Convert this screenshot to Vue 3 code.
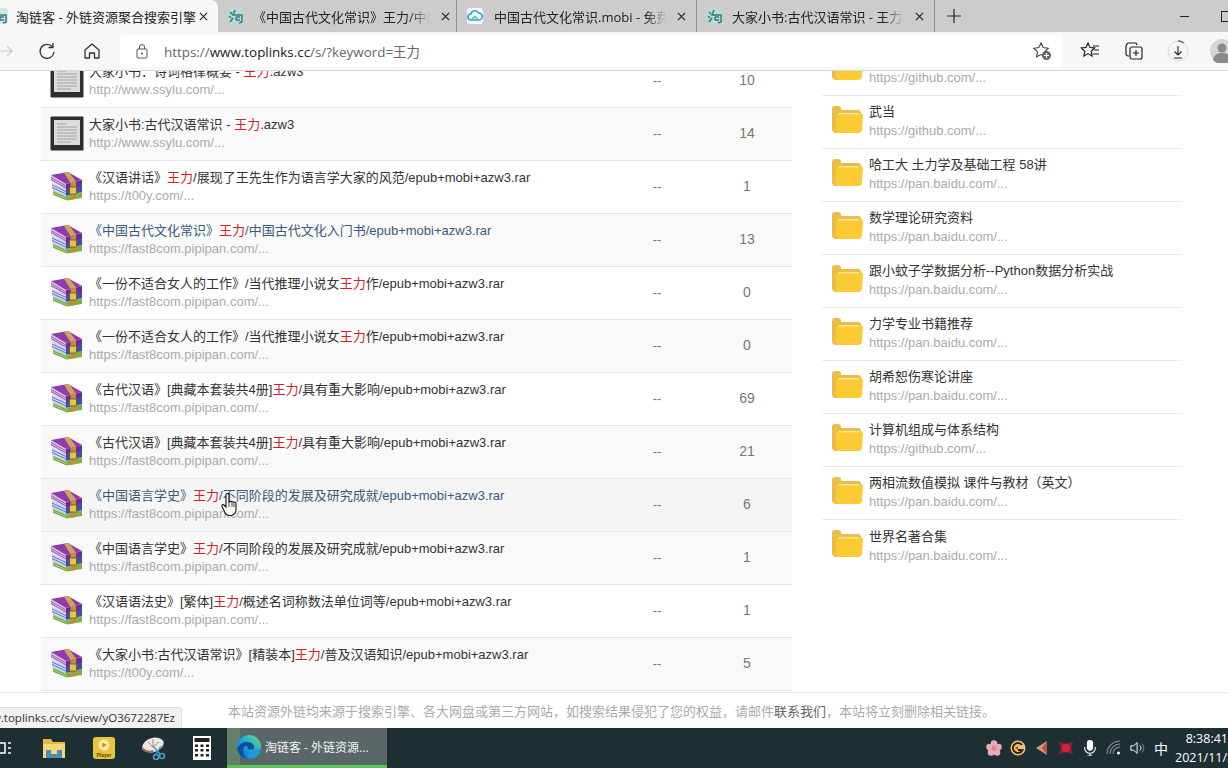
<script setup>
const rows = [
  { icon: 'book', pre: '大家小书：诗词格律概要 - ', post: '.azw3', url: 'http://www.ssylu.com/...', dl: '--', n: 10 },
  { icon: 'book', pre: '大家小书:古代汉语常识 - ', post: '.azw3', url: 'http://www.ssylu.com/...', dl: '--', n: 14 },
  { icon: 'rar', pre: '《汉语讲话》', post: '/展现了王先生作为语言学大家的风范/epub+mobi+azw3.rar', url: 'https://t00y.com/...', dl: '--', n: 1 },
  { icon: 'rar', pre: '《中国古代文化常识》', post: '/中国古代文化入门书/epub+mobi+azw3.rar', url: 'https://fast8com.pipipan.com/...', dl: '--', n: 13, visited: true },
  { icon: 'rar', pre: '《一份不适合女人的工作》/当代推理小说女', post: '作/epub+mobi+azw3.rar', url: 'https://fast8com.pipipan.com/...', dl: '--', n: 0 },
  { icon: 'rar', pre: '《一份不适合女人的工作》/当代推理小说女', post: '作/epub+mobi+azw3.rar', url: 'https://fast8com.pipipan.com/...', dl: '--', n: 0 },
  { icon: 'rar', pre: '《古代汉语》[典藏本套装共4册]', post: '/具有重大影响/epub+mobi+azw3.rar', url: 'https://fast8com.pipipan.com/...', dl: '--', n: 69 },
  { icon: 'rar', pre: '《古代汉语》[典藏本套装共4册]', post: '/具有重大影响/epub+mobi+azw3.rar', url: 'https://fast8com.pipipan.com/...', dl: '--', n: 21 },
  { icon: 'rar', pre: '《中国语言学史》', post: '/不同阶段的发展及研究成就/epub+mobi+azw3.rar', url: 'https://fast8com.pipipan.com/...', dl: '--', n: 6, visited: true },
  { icon: 'rar', pre: '《中国语言学史》', post: '/不同阶段的发展及研究成就/epub+mobi+azw3.rar', url: 'https://fast8com.pipipan.com/...', dl: '--', n: 1 },
  { icon: 'rar', pre: '《汉语语法史》[繁体]', post: '/概述名词称数法单位词等/epub+mobi+azw3.rar', url: 'https://fast8com.pipipan.com/...', dl: '--', n: 1 },
  { icon: 'rar', pre: '《大家小书:古代汉语常识》[精装本]', post: '/普及汉语知识/epub+mobi+azw3.rar', url: 'https://t00y.com/...', dl: '--', n: 5 },
]
const side = [
  { t: '计算机网络', u: 'https://github.com/...' },
  { t: '武当', u: 'https://github.com/...' },
  { t: '哈工大 土力学及基础工程 58讲', u: 'https://pan.baidu.com/...' },
  { t: '数学理论研究资料', u: 'https://pan.baidu.com/...' },
  { t: '跟小蚊子学数据分析--Python数据分析实战', u: 'https://pan.baidu.com/...' },
  { t: '力学专业书籍推荐', u: 'https://pan.baidu.com/...' },
  { t: '胡希恕伤寒论讲座', u: 'https://pan.baidu.com/...' },
  { t: '计算机组成与体系结构', u: 'https://github.com/...' },
  { t: '两相流数值模拟 课件与教材（英文）', u: 'https://pan.baidu.com/...' },
  { t: '世界名著合集', u: 'https://pan.baidu.com/...' },
]
const tabs = [
  { t: '《中国古代文化常识》王力/中国古代文化入门书', w: 239, pr: 6, ml: 8, icon: 'tao' },
  { t: '中国古代文化常识.mobi - 免费下载', w: 240, pr: 10, ml: 10, icon: 'cloud' },
  { t: '大家小书:古代汉语常识 - 王力.azw3', w: 238, pr: 10, ml: 8, icon: 'tao' },
]
</script>

<template>
  <div class="page">
    <header class="chrome">
      <div class="tabstrip">
        <div class="tab active">
          <svg class="fav first" viewBox="0 0 18 18"><rect x="1" y="1" width="16" height="16" rx="3" fill="#cfe6e4"/><path d="M3 5l2 2M2 9l2 2M3 15l3-4M8 3l-2 5h9v7l-3 1M9 10h4M9 13h4M9 10v3" fill="none" stroke="#2c7f84" stroke-width="1.5"/></svg>
          <span class="tab-title">淘链客 - 外链资源聚合搜索引擎</span>
          <svg class="x" viewBox="0 0 10 10"><path d="M1 1l8 8M9 1l-8 8" stroke="#222" stroke-width="1.3"/></svg>
        </div>
        <div v-for="tab in tabs" :key="tab.t" class="tab" :style="{ width: tab.w + 'px', paddingRight: tab.pr + 'px' }">
          <svg v-if="tab.icon === 'tao'" class="fav" viewBox="0 0 18 18"><rect x="1" y="1" width="16" height="16" rx="3" fill="#bcd8d8"/><path d="M3 5l2 2M2 9l2 2M3 15l3-4M8 3l-2 5h9v7l-3 1M9 10h4M9 13h4M9 10v3" fill="none" stroke="#2c7f84" stroke-width="1.5"/></svg>
          <svg v-else class="fav" viewBox="0 0 18 18"><rect x="1" y="1" width="16" height="16" rx="3" fill="#f4f6f8"/><path d="M5 13a3 3 0 010-6 4 4 0 017.5-1 3.5 3.5 0 01.5 7z" fill="none" stroke="#2da3e0" stroke-width="1.6"/><path d="M6 12.5l3-3 3 3" fill="none" stroke="#3cc0a8" stroke-width="1.4"/></svg>
          <span class="tab-title fade" :style="{ marginLeft: tab.ml + 'px' }">{{ tab.t }}</span>
          <svg class="x" viewBox="0 0 10 10"><path d="M1 1l8 8M9 1l-8 8" stroke="#222" stroke-width="1.3"/></svg>
        </div>
        <svg class="plus" viewBox="0 0 14 14"><path d="M7 0v14M0 7h14" stroke="#222" stroke-width="1.2"/></svg>
        <div class="winbtns">
          <span class="minimize"></span>
          <span class="restore"></span>
        </div>
      </div>
      <div class="toolbar">
        <svg class="back" viewBox="0 0 14 14"><path d="M0 7h13M8 2l5 5-5 5" fill="none" stroke="#c9c9c9" stroke-width="1.2"/></svg>
        <svg class="tool refresh" viewBox="0 0 18 18"><path d="M14.5 5A7 7 0 1016 10" fill="none" stroke="#333" stroke-width="1.3"/><path d="M15 1v4.5h-4.5" fill="none" stroke="#333" stroke-width="1.3"/></svg>
        <svg class="tool home" viewBox="0 0 18 18"><path d="M2 8l7-6 7 6v8h-4.5v-5h-5v5H2z" fill="none" stroke="#333" stroke-width="1.3" stroke-linejoin="round"/></svg>
        <div class="address">
          <svg class="lock" viewBox="0 0 12 16"><rect x="1" y="6" width="10" height="9" rx="1" fill="none" stroke="#555" stroke-width="1"/><path d="M3.5 6V4a2.5 2.5 0 015 0v2" fill="none" stroke="#555"/><circle cx="6" cy="10.5" r="1" fill="#555"/></svg>
          <span class="url"><i>https://</i>www.toplinks.cc<i>/s/?keyword=王力</i></span>
          <svg class="star-add" viewBox="0 0 20 20"><path d="M9 2l2.2 4.6 5 .7-3.6 3.5.8 5L9 13.5l-4.4 2.3.8-5L1.800 7.300l5-.7z" fill="none" stroke="#444" stroke-width="1.1"/><circle cx="14.500" cy="14.500" r="4.500" fill="#666"/><path d="M14.500 12v5M12 14.500h5" stroke="#fff" stroke-width="1.2"/></svg>
        </div>
        <svg class="tool fav-list" viewBox="0 0 20 20"><path d="M8 2l2 4.400 4.600.6-3.400 3.200.9 4.800L8 12.600 3.900 15l.9-4.800L1.400 7 6 6.400z" fill="none" stroke="#222" stroke-width="1.2"/><path d="M13 5h6M14 9h5M13 13h6" stroke="#222" stroke-width="1.2"/></svg>
        <svg class="tool coll" viewBox="0 0 20 20"><path d="M5 15H4a2 2 0 01-2-2V5l1-2a2 2 0 012-1h7l1 2" fill="none" stroke="#222" stroke-width="1.2"/><rect x="6" y="6" width="12" height="12" rx="2" fill="none" stroke="#222" stroke-width="1.2"/><path d="M12 9v6M9 12h6" stroke="#222" stroke-width="1.2"/></svg>
        <svg class="tool dl" viewBox="0 0 22 22"><circle cx="11" cy="11" r="10" fill="#f4f4f4" stroke="#dcdcdc" stroke-width="1"/><path d="M11 1a10 10 0 016 2" fill="none" stroke="#4a7f8f" stroke-width="1.400"/><path d="M11 6v9M7.500 11.500L11 15l3.500-3.500M7 18h8" fill="none" stroke="#222" stroke-width="1.100"/></svg>
        <svg class="avatar" viewBox="0 0 24 24"><circle cx="12" cy="12" r="12" fill="#d6d6d6"/><circle cx="12" cy="9" r="4.500" fill="#8a8a8a"/><path d="M3 21c1-6 5-7 9-7s8 1 9 7a12 12 0 01-18 0z" fill="#8a8a8a"/></svg>
      </div>
    </header>

    <main class="content">
      <div class="columns">
        <section class="results">
          <div v-for="(r, i) in rows" :key="i" class="row" :class="{ even: i % 2 === 1, hover: i === 8 }">
            <div class="cell-main">
              <svg v-if="r.icon === 'book'" class="icon" viewBox="0 0 34 35">
                <rect x="0.500" y="0.500" width="33" height="34" rx="1" fill="#2e2e2e"/>
                <rect x="4" y="4" width="26" height="25" fill="#dcdcdc"/>
                <path d="M7 8h9M7 11h20M7 14h20M7 17h20M7 20h20M7 23h20M7 26h14" stroke="#b4b4b4" stroke-width="1.300"/>
              </svg>
              <svg v-else class="icon rar" viewBox="0 0 32 29">
                <path d="M2 18l14 6v4.500L2 23z" fill="#a8d07c"/>
                <path d="M16 24l15-4v6l-15 2.500z" fill="#7fb040"/>
                <path d="M2 20l14 6M2 22l14 6" fill="none" stroke="#5f8f38" stroke-width="0.700"/>
                <path d="M1 10.500l14 6.500v7L1 18z" fill="#ccd5f2"/>
                <path d="M15 17l16-4v7l-16 4z" fill="#3e4fb4"/>
                <path d="M1 13l14 6.500M1 15.500l14 6.500" fill="none" stroke="#4a5cbc" stroke-width="0.800"/>
                <path d="M0 3l15 9v5.500L0 9z" fill="#d9c5e6"/>
                <path d="M0 5.500l15 8.500M0 7.500l15 8.500" fill="none" stroke="#8c3aa8" stroke-width="0.800"/>
                <path d="M15 12l16-4v5.500l-16 4z" fill="#6c2a94"/>
                <path d="M0 3l17-3 14 8-16 4z" fill="#8f3cab"/>
                <path d="M13 .8L18 0l7 9.500L19.500 11z" fill="#d2a45a"/>
                <path d="M19.500 11L25 9.500v17.200l-5.500 1.300z" fill="#c18d45"/>
                <rect x="18.500" y="15" width="7" height="7" rx="1" fill="#e6c53c" stroke="#6d5320" stroke-width="0.800"/>
              </svg>
              <div class="text">
                <div class="title" :class="{ visited: r.visited }">{{ r.pre }}<em>王力</em>{{ r.post }}</div>
                <div class="link">{{ r.url }}</div>
              </div>
            </div>
            <div class="num dash">{{ r.dl }}</div>
            <div class="num">{{ r.n }}</div>
          </div>
        </section>
        <aside class="side">
          <div v-for="(s, i) in side" :key="i" class="side-row">
            <svg class="folder" viewBox="0 0 31 27">
              <path d="M0 3a3 3 0 013-3h3a3 3 0 013 3v1h17a3 3 0 013 3v3L6 27H4a4 4 0 01-4-4z" fill="#e8bd4a"/>
              <path d="M4 10a3 3 0 013-3h21a3 3 0 013 3l-1 13a4 4 0 01-4 4H8a4 4 0 01-4-4z" fill="#fcca33"/>
              <path d="M7 7.800h20" stroke="#ffeeb0" stroke-width="1.200"/>
            </svg>
            <div class="text">
              <div class="title">{{ s.t }}</div>
              <div class="link">{{ s.u }}</div>
            </div>
          </div>
        </aside>
      </div>
      <svg class="cursor" viewBox="0 0 16 24"><path d="M5 2a1.500 1.500 0 013 0v7l1-.5c1-.3 1.700 0 2 .5 1-.5 1.800-.2 2 .5 1-.3 1.800.2 2 1v6c0 3-2 6-5 6H8c-2 0-3-1-4-3l-3-6c-.5-1.500 1-2.500 2-1.500l2 2z" fill="#fff" stroke="#111" stroke-width="1.100"/><path d="M8 9v5M11 9.500V14M13 10.500V14" stroke="#111" stroke-width="0.800"/></svg>
    </main>

    <footer class="notice">
      本站资源外链均来源于搜索引擎、各大网盘或第三方网站，如搜索结果侵犯了您的权益，请邮件<b>联系我们</b>，本站将立刻删除相关链接。
      <div class="status"><span>https://www.toplinks.cc/s/view/yO3672287Ez</span></div>
    </footer>

    <nav class="taskbar">
      <svg class="taskview" viewBox="0 0 14 14"><path d="M0 2h7v10H0M10 2h3M10 7h3M10 12h3" fill="none" stroke="#fff" stroke-width="1.500"/></svg>
      <svg class="tb explorer" viewBox="0 0 24 22"><path d="M1 2h8l2 3h12v16H1z" fill="#e8b93f"/><rect x="1" y="7" width="22" height="14" fill="#f5d777"/><rect x="4" y="13" width="16" height="8" fill="#4d8db0"/><rect x="9" y="13" width="6" height="4" fill="#f5d777"/></svg>
      <svg class="tb player" viewBox="0 0 24 24"><rect x="1" y="1" width="22" height="22" rx="3" fill="#e8c53a"/><circle cx="12" cy="9" r="5.500" fill="#f7e9a6"/><path d="M10.500 6.500l4 2.500-4 2.500z" fill="#b08b1b"/><text x="12" y="20.500" text-anchor="middle" class="player-t">Player</text></svg>
      <svg class="tb paint" viewBox="0 0 26 24"><ellipse cx="12" cy="9" rx="11" ry="7" fill="#efe6e0" transform="rotate(-18 12 9)"/><path d="M1.500 12.500c3 3.500 8 3.500 11 2.500" fill="none" stroke="#a86a66" stroke-width="2"/><path d="M12 3v8M7 6l5 5 6-5" fill="none" stroke="#9a8f88" stroke-width="1"/><circle cx="21" cy="20" r="2.500" fill="none" stroke="#3d9fd0" stroke-width="1.600"/><circle cx="15" cy="21" r="2.500" fill="none" stroke="#3d9fd0" stroke-width="1.600"/><path d="M12 10l7 8M20 10l-5 8" stroke="#3d9fd0" stroke-width="1.400"/></svg>
      <svg class="tb calc" viewBox="0 0 18 24"><rect width="18" height="24" fill="#fff"/><rect x="1.500" y="2" width="15" height="4" fill="#222"/><g fill="#222"><rect x="2" y="8.500" width="3" height="2.500"/><rect x="7.500" y="8.500" width="3" height="2.500"/><rect x="13" y="8.500" width="3" height="2.500"/><rect x="2" y="13" width="3" height="2.500"/><rect x="7.500" y="13" width="3" height="2.500"/><rect x="13" y="13" width="3" height="2.500"/><rect x="2" y="18" width="3" height="2.500"/><rect x="7.500" y="18" width="3" height="2.500"/><rect x="13" y="18" width="3" height="2.500"/></g></svg>
      <div class="task-active">
        <span class="task-edge"></span>
        <svg class="edge" viewBox="0 0 24 24"><defs><linearGradient id="eg" x1="0.900" y1="0.100" x2="0.100" y2="0.900"><stop offset="0" stop-color="#5ed48a"/><stop offset="0.500" stop-color="#22a6d8"/><stop offset="1" stop-color="#1565c8"/></linearGradient></defs><circle cx="12" cy="12" r="12" fill="url(#eg)"/><path d="M.5 14C2 8 8 6 13 7.500c4 1.300 5 4.500 3.500 7H11c-1-2 .5-3.500-2-3.500-3.500 0-4 7 0 12.500C4 22 1 18 .5 14z" fill="#0d4f9e"/><path d="M16.500 14.500c3 0 5.500 0 7.300-1-.5 4-3 7.500-6.800 9.500-3.500 1-6.500-.5-7.500-4 2.500 2 5.500 1 7-4.500z" fill="#1f9ad8"/></svg>
        <span class="task-label">淘链客 - 外链资源...</span>
      </div>
      <div class="tray">
        <svg class="ti" viewBox="0 0 16 16"><g fill="#e9a9b5"><circle cx="8" cy="3.500" r="3.300"/><circle cx="3.500" cy="7" r="3.300"/><circle cx="12.500" cy="7" r="3.300"/><circle cx="5" cy="12.500" r="3.300"/><circle cx="11" cy="12.500" r="3.300"/></g><circle cx="8" cy="8" r="2.200" fill="#d98a9a"/></svg>
        <svg class="ti" viewBox="0 0 16 16"><circle cx="8" cy="8" r="7.500" fill="#e8c878"/><path d="M12 5a5 5 0 10.500 5H8" fill="none" stroke="#3b2410" stroke-width="2"/><path d="M5 8l3-2v4z" fill="#c33"/></svg>
        <svg class="ti" viewBox="0 0 16 16"><path d="M13 1v14L2 8z" fill="#d59a72"/><path d="M13 1v14L8 8z" fill="#b5573e"/></svg>
        <svg class="ti" viewBox="0 0 18 16"><path d="M1 1l5 2h6l5-2-2 5v4l2 5-5-2H6l-5 2 2-5V6z" fill="#8d2530"/><circle cx="9" cy="8" r="4.500" fill="#de1f3c"/></svg>
        <svg class="ti" viewBox="0 0 14 18"><rect x="3.500" y="0" width="7" height="12" rx="3.500" fill="#fff"/><path d="M1 8v1a6 6 0 0012 0V8M7 15v3M4 18h6" fill="none" stroke="#fff" stroke-width="1.200"/></svg>
        <svg class="ti wifi" viewBox="0 0 16 16"><path d="M1 14A13 13 0 0114 1M4 14a10 10 0 0110-10M7 14a7 7 0 017-7" fill="none" stroke="#8b9499" stroke-width="1.100"/><circle cx="12.500" cy="13" r="1.500" fill="#fff"/></svg>
        <svg class="ti" viewBox="0 0 18 16"><path d="M1 5.500h3L8 2v12l-4-3.500H1z" fill="none" stroke="#fff" stroke-width="1.100"/><path d="M11 5a4 4 0 010 6" fill="none" stroke="#fff" stroke-width="1.100"/><path d="M13.500 3a7 7 0 010 10" fill="none" stroke="#7c868b" stroke-width="1.100"/></svg>
        <span class="ime">中</span>
        <div class="clock">
          <span class="time">8:38:41</span>
          <span class="date">2021/11/2</span>
        </div>
      </div>
    </nav>
  </div>
</template>

<style scoped>
.page {
  width: 1228px;
  height: 768px;
  overflow: hidden;
  display: flex;
  flex-direction: column;
  font-family: "Liberation Sans", "Noto Sans CJK SC", sans-serif;
  background: #fff;
  color: #333;
}
.chrome {
  flex: none;
  height: 71px;
  border-bottom: 1px solid #d9d9d9;
  box-sizing: border-box;
  background: #f7f7f7;
}
.tabstrip {
  height: 32px;
  background: #cdcbcc;
  display: flex;
  align-items: center;
}
.tab {
  height: 32px;
  display: flex;
  align-items: center;
  box-sizing: border-box;
  padding: 0 6px 0 9px;
  border-right: 1px solid #8d8d8d;
  background-clip: padding-box;
  position: relative;
  font-size: 13px;
  color: #222;
  font-family: "Open Sans", "Noto Sans CJK SC", sans-serif;
}
.tab.active {
  width: 218px;
  background: #f7f7f7;
  border-right: 0;
  border-radius: 0 7px 0 0;
  padding: 0 10px 0 0;
  font-size: 13px;
}
.fav {
  width: 18px;
  height: 18px;
  flex: none;
}
.fav.first {
  margin-left: -9px;
}
.tab-title {
  flex: 1;
  min-width: 0;
  margin-left: 7px;
  white-space: nowrap;
  overflow: hidden;
}
.tab-title.fade {
  -webkit-mask-image: linear-gradient(90deg, #000 88%, transparent);
  mask-image: linear-gradient(90deg, #000 88%, transparent);
}
.x {
  width: 9px;
  height: 9px;
  flex: none;
  margin: 0 0 0 11px;
}
.active .x {
  margin-left: 0;
}
.plus {
  width: 14px;
  height: 14px;
  margin-left: 12px;
}
.winbtns {
  margin-left: auto;
  display: flex;
  align-items: center;
  gap: 32px;
  margin-right: -4px;
}
.minimize {
  width: 9px;
  height: 1px;
  background: #222;
}
.restore {
  width: 9px;
  height: 9px;
  border: 1px solid #222;
}
.toolbar {
  height: 38px;
  display: flex;
  align-items: center;
  position: relative;
}
.back {
  width: 14px;
  height: 14px;
  margin-left: -1px;
  margin-right: 25px;
  flex: none;
}
.tool {
  width: 18px;
  height: 18px;
  flex: none;
}
.home {
  margin-left: 27px;
}
.address {
  width: 942px;
  height: 32px;
  flex: none;
  margin-left: 19px;
  background: #fff;
  border-radius: 4px;
  display: flex;
  align-items: center;
  padding: 0 10px 0 16px;
  box-sizing: border-box;
}
.lock {
  width: 12px;
  height: 16px;
  flex: none;
}
.url {
  margin-left: 16px;
  font-size: 13.400px;
  color: #222;
  font-family: "Open Sans", "Noto Sans CJK SC", sans-serif;
  white-space: nowrap;
}
.url i {
  font-style: normal;
  color: #666;
}
.star-add {
  width: 20px;
  height: 20px;
  margin-left: auto;
}
.fav-list {
  margin-left: 18px;
  width: 20px;
  height: 20px;
}
.coll {
  margin-left: 24px;
  width: 20px;
  height: 20px;
}
.dl {
  margin-left: 23px;
  width: 22px;
  height: 22px;
}
.avatar {
  width: 24px;
  height: 24px;
  flex: none;
  margin-left: 21px;
}
.content {
  flex: 1;
  min-height: 0;
  overflow: hidden;
  position: relative;
}
.columns {
  display: flex;
  align-items: flex-start;
  margin-top: -28px;
  padding-left: 41px;
}
.results {
  width: 751px;
  flex: none;
  padding-top: 12px;
}
.row {
  height: 53px;
  box-sizing: border-box;
  border-bottom: 1px solid #e6e6e6;
  display: grid;
  grid-template-columns: 571px 90px 90px;
  align-items: center;
}
.row.even {
  background: #f9f9f9;
}
.row.hover {
  background: #f5f5f5;
}
.cell-main {
  display: flex;
  align-items: center;
  padding-left: 9px;
}
.icon {
  width: 34px;
  height: 35px;
  flex: none;
  margin-top: -1px;
}
.icon.rar {
  width: 32px;
  height: 29px;
  margin-left: 1px;
  margin-top: -2px;
}
.text {
  margin-left: 5px;
  min-width: 0;
}
.icon.rar + .text {
  margin-left: 6px;
}
.title {
  font-size: 13px;
  line-height: 18px;
  color: #333;
  white-space: nowrap;
}
.title.visited {
  color: #3a5a7c;
}
.title em {
  font-style: normal;
  color: #c8232c;
}
.link {
  font-size: 13px;
  line-height: 18px;
  color: #aaa;
  white-space: nowrap;
}
.num {
  text-align: center;
  font-size: 14px;
  color: #777;
  padding-bottom: 2px;
}
.dash {
  font-size: 13px;
}
.side {
  width: 360px;
  flex: none;
  margin-left: 30px;
}
.side-row {
  height: 53px;
  box-sizing: border-box;
  border-bottom: 1px solid #eaeaea;
  display: flex;
  align-items: center;
  padding-left: 10px;
}
.side-row:last-child {
  border-bottom: 0;
}
.side-row .title {
  margin-top: -1px;
  margin-bottom: 1px;
}
.folder {
  width: 31px;
  height: 27px;
  flex: none;
  margin-bottom: 6px;
}
.side-row .text {
  margin-left: 6px;
}
.cursor {
  position: absolute;
  left: 221px;
  top: 422px;
  width: 16px;
  height: 24px;
}
.notice {
  flex: none;
  height: 36px;
  box-sizing: border-box;
  border-top: 1px solid #e6e6e6;
  position: relative;
  text-align: center;
  font-size: 13px;
  line-height: 37px;
  padding-right: 5px;
  color: #aaa;
  background: #fff;
}
.notice b {
  font-weight: normal;
  color: #666;
}
.status {
  position: absolute;
  left: 0;
  bottom: 0;
  width: 182px;
  height: 21px;
  box-sizing: border-box;
  background: #f1f1f1;
  border: 1px solid #ddd;
  border-bottom: 0;
  border-left: 0;
  border-radius: 0 3px 0 0;
  display: flex;
  justify-content: flex-end;
  align-items: center;
  overflow: hidden;
  padding-right: 6px;
  font-family: "Open Sans", sans-serif;
  font-size: 11.500px;
  line-height: 20px;
  color: #333;
  white-space: nowrap;
}
.status span {
  flex: none;
}
.taskbar {
  flex: none;
  height: 40px;
  background: #1e2f33;
  display: flex;
  align-items: center;
  color: #fff;
  font-family: "Open Sans", "Noto Sans CJK SC", sans-serif;
}
.taskview {
  width: 14px;
  height: 14px;
  margin-left: -2px;
  flex: none;
}
.tb {
  flex: none;
}
.explorer {
  width: 24px;
  height: 22px;
  margin-left: 30px;
}
.player {
  width: 24px;
  height: 24px;
  margin-left: 26px;
}
.player-t {
  font-size: 5px;
  font-weight: 700;
  fill: #5c4a10;
  font-family: "Liberation Sans", sans-serif;
}
.paint {
  width: 26px;
  height: 24px;
  margin-left: 25px;
}
.calc {
  width: 18px;
  height: 24px;
  margin-left: 26px;
}
.task-active {
  width: 160px;
  height: 40px;
  margin-left: 16px;
  box-sizing: border-box;
  background: #5b6668;
  border-bottom: 3px solid #5ac452;
  display: flex;
  align-items: center;
  position: relative;
  flex: none;
}
.task-edge {
  position: absolute;
  left: 0;
  top: 0;
  bottom: 0;
  width: 13px;
  background: #64806a;
}
.edge {
  width: 24px;
  height: 24px;
  margin-left: 10px;
  position: relative;
  flex: none;
}
.task-label {
  font-size: 12px;
  margin-left: 4px;
  white-space: nowrap;
  position: relative;
  color: #f2f2f2;
}
.tray {
  margin-left: auto;
  display: flex;
  align-items: center;
}
.ti {
  width: 16px;
  height: 16px;
  flex: none;
  margin-right: 8px;
}
.ime {
  font-size: 14px;
  margin: 0 7px 0 0;
}
.clock {
  display: flex;
  flex-direction: column;
  font-size: 12.500px;
  line-height: 19px;
  width: 53px;
  overflow: hidden;
  white-space: nowrap;
}
.time {
  align-self: flex-end;
}
.date {
  align-self: flex-start;
}
</style>

<style>
html, body {
  margin: 0;
  overflow: hidden;
}
</style>
